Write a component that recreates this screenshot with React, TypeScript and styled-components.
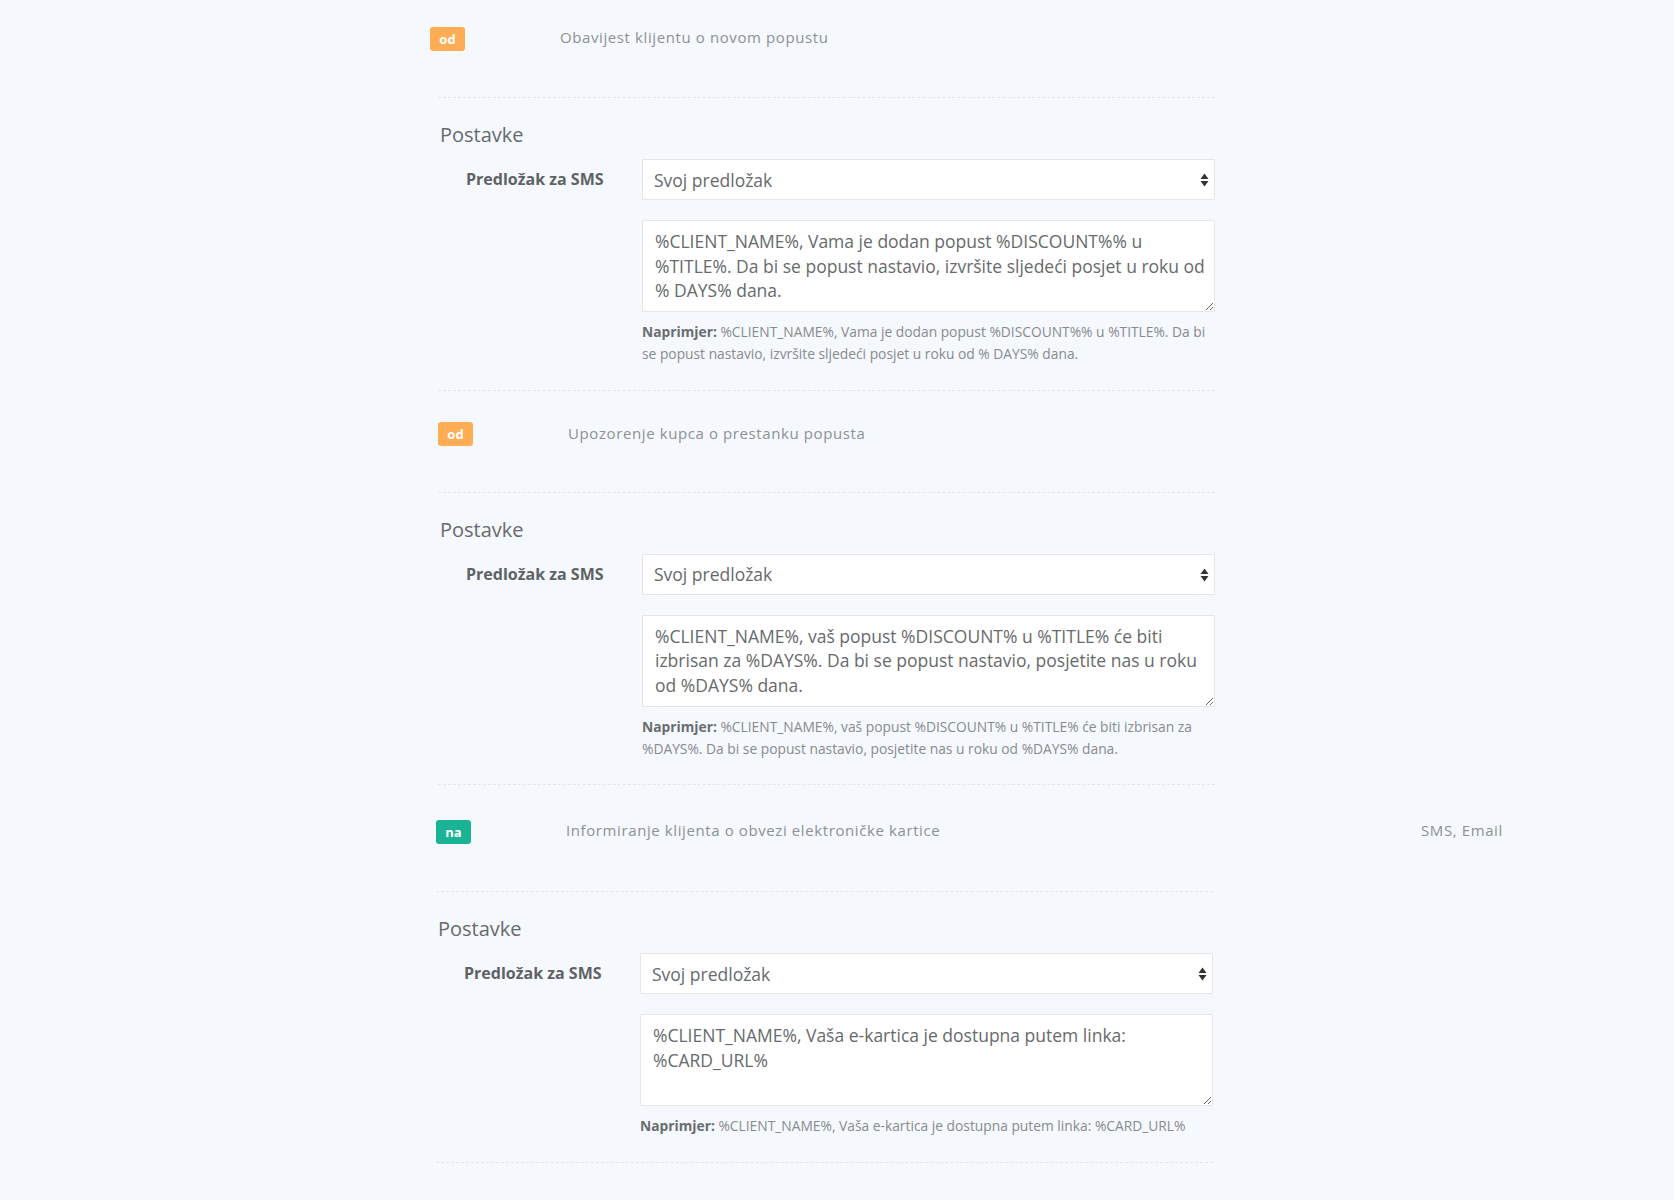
import styled, { createGlobalStyle } from "styled-components";

const GlobalStyle = createGlobalStyle`
  body {
    margin: 0;
    background: #f5f8fd;
    font-family: "Open Sans", "Liberation Sans", sans-serif;
    color: #676a6c;
  }
`;

type Notice = {
  status: "od" | "na";
  title: string;
  channels?: string;
  template: string;
  example: string;
};

const notices: Notice[] = [
  {
    status: "od",
    title: "Obavijest klijentu o novom popustu",
    template:
      "%CLIENT_NAME%, Vama je dodan popust %DISCOUNT%% u %TITLE%. Da bi se popust nastavio, izvršite sljedeći posjet u roku od % DAYS% dana.",
    example:
      "%CLIENT_NAME%, Vama je dodan popust %DISCOUNT%% u %TITLE%. Da bi se popust nastavio, izvršite sljedeći posjet u roku od % DAYS% dana.",
  },
  {
    status: "od",
    title: "Upozorenje kupca o prestanku popusta",
    template:
      "%CLIENT_NAME%, vaš popust %DISCOUNT% u %TITLE% će biti izbrisan za %DAYS%. Da bi se popust nastavio, posjetite nas u roku od %DAYS% dana.",
    example:
      "%CLIENT_NAME%, vaš popust %DISCOUNT% u %TITLE% će biti izbrisan za %DAYS%. Da bi se popust nastavio, posjetite nas u roku od %DAYS% dana.",
  },
  {
    status: "na",
    title: "Informiranje klijenta o obvezi elektroničke kartice",
    channels: "SMS, Email",
    template: "%CLIENT_NAME%, Vaša e-kartica je dostupna putem linka: %CARD_URL%",
    example: "%CLIENT_NAME%, Vaša e-kartica je dostupna putem linka: %CARD_URL%",
  },
];

const App = () => {
  return (
    <>
      <GlobalStyle />
      <Page>
        {notices.map((n, i) => (
          <NoticeGroup key={n.title} $shift={i === 2 ? -2 : 0}>
            <NoticeRow $first={i === 0} $tall={!!n.channels}>
              <StatusBadge $on={n.status === "na"}>{n.status}</StatusBadge>
              <NoticeTitle>{n.title}</NoticeTitle>
              <Channels>{n.channels}</Channels>
            </NoticeRow>
            <Settings>
              <SettingsTitle>Postavke</SettingsTitle>
              <FieldRow>
                <FieldLabel>Predložak za SMS</FieldLabel>
                <FieldControls>
                  <SelectWrap>
                    <Select defaultValue="own">
                      <option value="own">Svoj predložak</option>
                    </Select>
                    <SelectArrows width="9" height="14" viewBox="0 0 9 14">
                      <path d="M4.5 0.5 L8.5 6 H0.5 Z" fill="#333" />
                      <path d="M4.5 13.5 L8.5 8 H0.5 Z" fill="#333" />
                    </SelectArrows>
                  </SelectWrap>
                  <TemplateArea defaultValue={n.template} />
                  <Hint>
                    <HintLead>Naprimjer: </HintLead>
                    {n.example}
                  </Hint>
                </FieldControls>
              </FieldRow>
            </Settings>
          </NoticeGroup>
        ))}
      </Page>
    </>
  );
};

export default App;

const Page = styled.div`
  padding-left: 438px;
  padding-bottom: 39px;
`;

const NoticeGroup = styled.section<{ $shift: number }>`
  margin-left: ${(p) => p.$shift}px;
`;

const NoticeRow = styled.div<{ $first?: boolean; $tall?: boolean }>`
  display: grid;
  grid-template-columns: 130px 855px auto;
  align-items: center;
  align-content: start;
  box-sizing: border-box;
  height: ${(p) => (p.$first ? "97px" : p.$tall ? "106px" : "101px")};
  padding-top: ${(p) => (p.$first ? "26px" : p.$tall ? "34px" : "31px")};
  margin-left: ${(p) => (p.$first ? "-8px" : "0")};
`;

const StatusBadge = styled.span<{ $on?: boolean }>`
  justify-self: start;
  display: inline-flex;
  align-items: center;
  justify-content: center;
  width: 35px;
  height: 24px;
  border-radius: 3px;
  background: ${(p) => (p.$on ? "#1ab394" : "#ffad55")};
  color: #fff;
  font-size: 13px;
  font-weight: 700;
`;

const NoticeTitle = styled.span`
  padding-bottom: 3px;
  font-size: 15px;
  letter-spacing: 0.6px;
  color: #8e9193;
  line-height: 22px;
`;

const Channels = styled.span`
  padding-bottom: 3px;
  font-size: 15px;
  letter-spacing: 0.6px;
  color: #8e9193;
  line-height: 22px;
`;

const Settings = styled.div`
  width: 777px;
  border-top: 1px dashed #e4e7ea;
  border-bottom: 1px dashed #e4e7ea;
  padding: 23px 0 24.5px;
`;

const SettingsTitle = styled.h3`
  margin: 0 0 10px 2px;
  font-size: 20px;
  font-weight: 400;
  line-height: 28px;
  color: #676a6c;
`;

const FieldRow = styled.div`
  display: grid;
  grid-template-columns: 204px 1fr;
`;

const FieldLabel = styled.label`
  padding-left: 28px;
  font-size: 16px;
  font-weight: 700;
  line-height: 41px;
  color: #5f6264;
`;

const FieldControls = styled.div`
  display: flex;
  flex-direction: column;
`;

const SelectWrap = styled.div`
  position: relative;
`;

const Select = styled.select`
  appearance: none;
  width: 100%;
  height: 41px;
  box-sizing: border-box;
  padding: 0 30px 0 11px;
  background: #fff;
  border: 1px solid #e5e6e7;
  border-radius: 1px;
  font-family: "Open Sans", "Liberation Sans", sans-serif;
  font-size: 17.5px;
  color: #676a6c;
  outline: none;
`;

const SelectArrows = styled.svg`
  position: absolute;
  right: 6px;
  top: 14px;
  pointer-events: none;
`;

const TemplateArea = styled.textarea`
  margin-top: 20px;
  height: 92px;
  box-sizing: border-box;
  padding: 8px 6px 8px 12px;
  background: #fff;
  border: 1px solid #e5e6e7;
  border-radius: 1px;
  font-family: "Open Sans", "Liberation Sans", sans-serif;
  font-size: 17.5px;
  line-height: 24.5px;
  color: #676a6c;
  resize: vertical;
  outline: none;
`;

const Hint = styled.p`
  margin: 9px 0 0;
  font-size: 13.8px;
  line-height: 22px;
  color: #888b8d;
`;

const HintLead = styled.b`
  font-weight: 700;
  color: #6a6d6f;
`;
